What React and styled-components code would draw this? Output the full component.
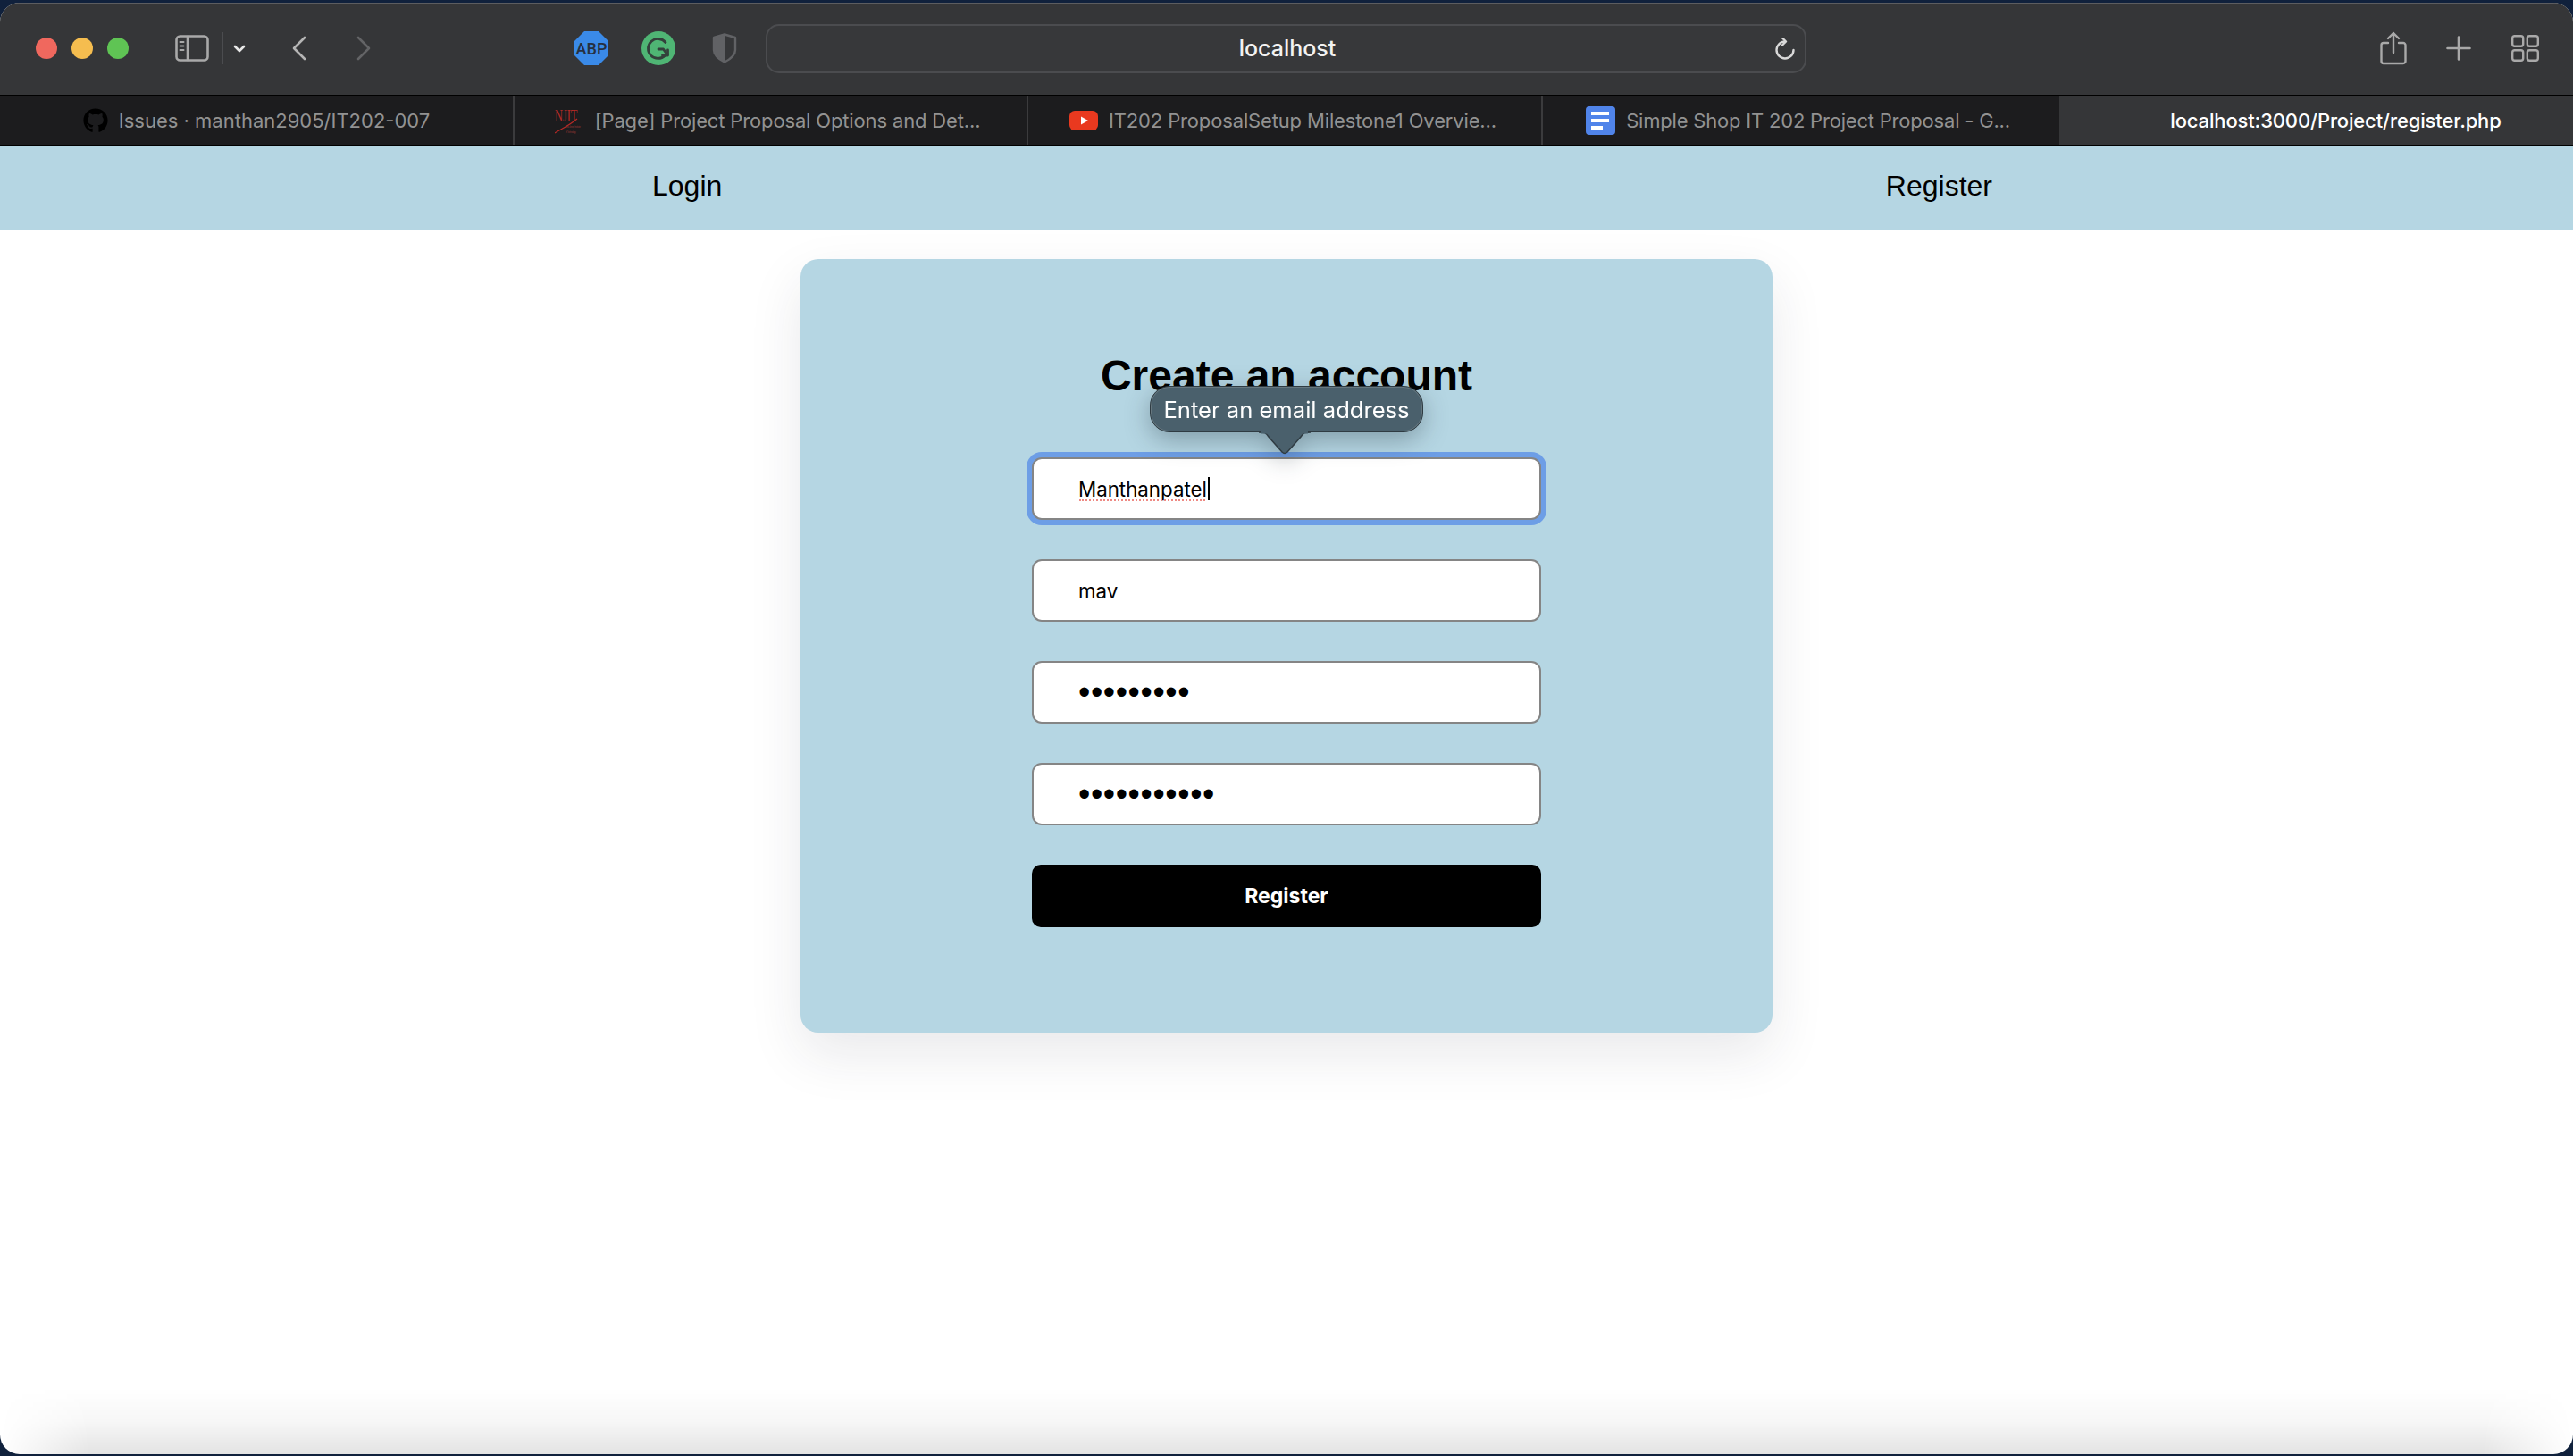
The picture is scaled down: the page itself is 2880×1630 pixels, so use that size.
import React from "react";
import styled, { createGlobalStyle } from "styled-components";
import { FaGithub } from "react-icons/fa";

const Global = createGlobalStyle`
  html, body { margin: 0; padding: 0; background: #10213c; }
  * { box-sizing: border-box; }
`;

const UI_FONT = `Inter, "Noto Sans", sans-serif`;
const PAGE_FONT = `"Liberation Sans", Arial, sans-serif`;

const Screen = styled.div`
  width: 2880px;
  height: 1630px;
  padding-top: 3px;
  background: #10213c;
  overflow: hidden;
`;
const BrowserWindow = styled.div`
  position: relative;
  height: 1625px;
  border-radius: 22px;
  overflow: hidden;
  background: #fff;
  display: flex;
  flex-direction: column;
`;
const Toolbar = styled.div`
  height: 103px;
  flex: none;
  display: flex;
  align-items: center;
  padding: 0 38px 2px 40px;
  background: #353638;
  border-top: 1px solid #5c5d60;
  font-family: ${UI_FONT};
`;
const Lights = styled.div`
  display: flex;
  gap: 16px;
`;
const Light = styled.span`
  width: 24px;
  height: 24px;
  border-radius: 50%;
  background: ${(p) => p.$color};
`;
const ToolIcon = styled.svg`
  flex: none;
  display: block;
  margin-left: ${(p) => p.$left || 0}px;
`;
const Divider = styled.span`
  width: 2px;
  height: 36px;
  margin-left: 14px;
  background: #4b4c4f;
`;
const AddressBar = styled.div`
  width: 1165px;
  height: 55px;
  margin-left: 32px;
  padding-left: 3px;
  position: relative;
  display: flex;
  align-items: center;
  justify-content: center;
  border: 2px solid #4b4c4f;
  border-radius: 15px;
  background: #37383a;
  color: #f2f2f2;
  font-size: 25px;
  font-weight: 500;
`;
const ReloadIcon = styled.svg`
  position: absolute;
  right: 9px;
  top: 13px;
`;
const RightTools = styled.div`
  margin-left: auto;
  display: flex;
  align-items: center;
`;
const TabStrip = styled.div`
  height: 57px;
  flex: none;
  display: flex;
  background: #1c1c1e;
  border-top: 1px solid #000;
  border-bottom: 1px solid #000;
  font-family: ${UI_FONT};
`;
const Tab = styled.div`
  width: ${(p) => p.$width}px;
  flex: none;
  display: flex;
  align-items: center;
  justify-content: center;
  gap: 12px;
  padding-left: ${(p) => (p.$active ? 44 : 0)}px;
  padding-right: ${(p) => p.$nudge || 0}px;
  background: ${(p) => (p.$active ? "#353638" : "transparent")};
  color: ${(p) => (p.$active ? "#fff" : "#929292")};
  font-size: 22px;
  letter-spacing: ${(p) => p.$tracking || "-0.15px"};
  font-weight: ${(p) => (p.$active ? 500 : 400)};
  white-space: nowrap;
  border-right: ${(p) => (p.$last ? "none" : "2px solid #3b3b3d")};
`;
const Favicon = styled.svg`
  flex: none;
  display: block;
`;
const NavBar = styled.nav`
  height: 94px;
  flex: none;
  display: flex;
  align-items: center;
  justify-content: space-between;
  padding: 0 650px 4px 730px;
  background: #b5d6e3;
  color: #000;
  font-family: ${PAGE_FONT};
  font-size: 32px;
`;
const Content = styled.main`
  flex: 1;
  display: flex;
  flex-direction: column;
  align-items: center;
  padding-top: 33px;
`;
const Card = styled.section`
  width: 1088px;
  height: 866px;
  padding-top: 103px;
  display: flex;
  flex-direction: column;
  align-items: center;
  border-radius: 20px;
  background: #b5d6e3;
  box-shadow: 0 24px 60px rgba(40, 40, 60, 0.1);
`;
const Title = styled.h1`
  margin: 0 0 63px;
  font-family: ${PAGE_FONT};
  font-size: 48px;
  line-height: 56px;
  font-weight: 700;
  color: #000;
`;
const Form = styled.form`
  width: 570px;
  display: flex;
  flex-direction: column;
  gap: 44px;
`;
const Field = styled.div`
  position: relative;
  height: 70px;
`;
const Input = styled.input`
  width: 100%;
  height: 100%;
  padding: 0 0 0 50px;
  border: 2px solid #858585;
  border-radius: 11px;
  outline: none;
  background: #fff;
  color: #000;
  font-family: ${UI_FONT};
  font-size: 22.3px;
  box-shadow: ${(p) => (p.$focused ? "0 0 0 6px #6d9ee6" : "none")};
`;
const PasswordInput = styled(Input)`
  font-family: ${PAGE_FONT};
  font-size: 38px;
  letter-spacing: 0.6px;
`;
const Caret = styled.span`
  position: absolute;
  left: 197px;
  top: 22px;
  width: 2px;
  height: 26px;
  background: #000;
`;
const SpellMark = styled.span`
  position: absolute;
  left: 53px;
  top: 47px;
  width: 141px;
  border-top: 2px dotted #ee8a84;
`;
const SubmitButton = styled.button`
  height: 70px;
  border: none;
  border-radius: 10px;
  background: #000;
  color: #fff;
  font-family: ${UI_FONT};
  font-size: 23px;
  font-weight: 700;
`;
const Tooltip = styled.div`
  position: absolute;
  left: 132px;
  top: -80px;
  width: 306px;
  height: 52px;
  display: flex;
  align-items: center;
  justify-content: center;
  border: 1px solid #2f3b42;
  border-radius: 22px;
  background: #4a606c;
  box-shadow: inset 0 0 0 1px #66777f;
  color: #fff;
  font-family: ${UI_FONT};
  font-size: 25.6px;
  white-space: nowrap;
  filter: drop-shadow(0 8px 14px rgba(20, 30, 40, 0.32));
`;
const TooltipTail = styled.svg`
  position: absolute;
  left: 119px;
  top: 48px;
`;
const BottomFade = styled.div`
  position: absolute;
  left: 0;
  right: 0;
  bottom: 0;
  height: 74px;
  background: linear-gradient(to bottom, rgba(0, 0, 0, 0), rgba(0, 0, 0, 0.03) 50%, rgba(0, 0, 0, 0.11));
  mask-image: linear-gradient(to right, transparent, #000 100px, #000 calc(100% - 100px), transparent);
  pointer-events: none;
`;

const stroke = { fill: "none", strokeLinecap: "round", strokeLinejoin: "round" };

const SidebarIcon = () => (
  <ToolIcon $left={52} width="38" height="30" viewBox="0 0 38 30" {...stroke} stroke="#a9a9a9" strokeWidth="2.6">
    <rect x="1.5" y="1.5" width="35" height="27" rx="4" />
    <path d="M14 2v26" />
    <path d="M5.5 8h4M5.5 12.5h4M5.5 17h4" strokeWidth="2" />
  </ToolIcon>
);

const ChevronDown = () => (
  <ToolIcon $left={11} width="14" height="9" viewBox="0 0 14 9" {...stroke} stroke="#e8e8e8" strokeWidth="2.6">
    <path d="M2 2l5 5 5-5" />
  </ToolIcon>
);

const Chevron = ({ left, color, flip }) => (
  <ToolIcon $left={left} width="16" height="28" viewBox="0 0 16 28" {...stroke} stroke={color} strokeWidth="2.6">
    <path d={flip ? "M2 2l12 12L2 26" : "M14 2L2 14l12 12"} />
  </ToolIcon>
);

const AbpIcon = () => (
  <ToolIcon $left={228} width="38" height="38" viewBox="0 0 38 38">
    <path d="M11 0h16l11 11v16L27 38H11L0 27V11z" fill="#3a8ae8" />
    <text x="19" y="25.5" textAnchor="middle" fontFamily="Roboto, sans-serif" fontWeight="500" fontSize="18" fill="#263040">ABP</text>
  </ToolIcon>
);

const GrammarlyIcon = () => (
  <ToolIcon $left={37} width="38" height="38" viewBox="0 0 38 38">
    <circle cx="19" cy="19" r="19" fill="#4fb574" />
    <g {...stroke} stroke="#33403b" strokeWidth="2.8">
      <path d="M27 12.5A11 11 0 1 0 26.5 27" />
      <path d="M19 20h5.5l4.5 6.5" />
      <path d="M29.5 21v6h-6" />
    </g>
  </ToolIcon>
);

const ShieldIcon = () => (
  <ToolIcon $left={41} width="28" height="34" viewBox="0 0 28 34">
    <path d="M14 1.5L2 5v14c0 6 5 10 12 13.5z" fill="#616265" />
    <path d="M14 1.5L26 5v14c0 6-5 10-12 13.5C7 29 2 25 2 19V5z" fill="none" stroke="#616265" strokeWidth="2.4" strokeLinejoin="round" />
  </ToolIcon>
);

const ShareIcon = () => (
  <ToolIcon width="30" height="38" viewBox="0 0 30 38" {...stroke} stroke="#a9a9a9" strokeWidth="2.4">
    <path d="M9 13H4a2.5 2.5 0 0 0-2.5 2.5v18A2.5 2.5 0 0 0 4 36h22a2.5 2.5 0 0 0 2.5-2.5v-18A2.5 2.5 0 0 0 26 13h-5" />
    <path d="M15 24V2M9 8l6-6 6 6" />
  </ToolIcon>
);

const PlusIcon = () => (
  <ToolIcon $left={44} width="28" height="28" viewBox="0 0 28 28" {...stroke} stroke="#a9a9a9" strokeWidth="2.6">
    <path d="M14 1.5v25M1.5 14h25" />
  </ToolIcon>
);

const TabsIcon = () => (
  <ToolIcon $left={45} width="31" height="30" viewBox="0 0 31 30" fill="none" stroke="#a9a9a9" strokeWidth="2.4">
    <rect x="1.2" y="1.2" width="12" height="11.5" rx="2.5" />
    <rect x="17.8" y="1.2" width="12" height="11.5" rx="2.5" />
    <rect x="1.2" y="17.3" width="12" height="11.5" rx="2.5" />
    <rect x="17.8" y="17.3" width="12" height="11.5" rx="2.5" />
  </ToolIcon>
);

const NjitIcon = () => (
  <Favicon width="33" height="32" viewBox="0 0 33 32">
    <text transform="translate(0 17) scale(0.7 1)" fontFamily="Liberation Serif, serif" fontSize="18" fill="#b52a26">NJIT</text>
    <path d="M0 30C8 25 17 21 25 14" fill="none" stroke="#b52a26" strokeWidth="1.2" />
    <text transform="translate(12 24) scale(0.6 1)" fontFamily="Liberation Sans, sans-serif" fontSize="3.4" fill="#9c3a36">New Jersey Institute</text>
    <text transform="translate(12 30) scale(0.6 1)" fontFamily="Liberation Sans, sans-serif" fontSize="3.4" fill="#9c3a36">of Technology</text>
  </Favicon>
);

const YoutubeIcon = () => (
  <Favicon width="32" height="22" viewBox="0 0 32 22">
    <rect width="32" height="22" rx="6" fill="#e9391f" />
    <path d="M13 6.5l8 4.5-8 4.5z" fill="#fff" />
  </Favicon>
);

const DocsIcon = () => (
  <Favicon width="33" height="32" viewBox="0 0 33 32">
    <rect width="33" height="32" rx="4" fill="#5084ea" />
    <path d="M6 6h20v4H6zM6 14h20v4H6zM6 22h13v4H6z" fill="#fff" />
  </Favicon>
);

const tabs = [
  { width: 576, icon: <FaGithub size={28} color="#000" />, title: "Issues · manthan2905/IT202-007", tracking: "0px" },
  { width: 575, icon: <NjitIcon />, title: "[Page] Project Proposal Options and Det...", nudge: 7 },
  { width: 576, icon: <YoutubeIcon />, title: "IT202 ProposalSetup Milestone1 Overvie...", nudge: 4 },
  { width: 578, icon: <DocsIcon />, title: "Simple Shop IT 202 Project Proposal - G...", nudge: 7, tracking: "-0.2px" },
  { width: 575, title: "localhost:3000/Project/register.php", active: true },
];

export default function App() {
  return (
    <Screen>
      <Global />
      <BrowserWindow>
        <Toolbar>
          <Lights>
            <Light $color="#f0685e" />
            <Light $color="#f5bd4f" />
            <Light $color="#5fc454" />
          </Lights>
          <SidebarIcon />
          <Divider />
          <ChevronDown />
          <Chevron left={52} color="#b5b5b5" />
          <Chevron left={56} color="#636466" flip />
          <AbpIcon />
          <GrammarlyIcon />
          <ShieldIcon />
          <AddressBar>
            localhost
            <ReloadIcon width="26" height="26" viewBox="0 0 26 26" {...stroke} stroke="#d8d8d8" strokeWidth="2.4">
              <path d="M13 4.5a9.5 9.5 0 1 0 9.5 9.5" />
              <path d="M10 0.5l4 4-4 4" />
            </ReloadIcon>
          </AddressBar>
          <RightTools>
            <ShareIcon />
            <PlusIcon />
            <TabsIcon />
          </RightTools>
        </Toolbar>
        <TabStrip>
          {tabs.map((tab, i) => (
            <Tab
              key={tab.title}
              $width={tab.width}
              $active={tab.active}
              $nudge={tab.nudge}
              $tracking={tab.tracking}
              $last={i >= tabs.length - 2}
            >
              {tab.icon}
              {tab.title}
            </Tab>
          ))}
        </TabStrip>
        <NavBar>
          <span>Login</span>
          <span>Register</span>
        </NavBar>
        <Content>
          <Card>
            <Title>Create an account</Title>
            <Form onSubmit={(e) => e.preventDefault()}>
              <Field>
                <Input $focused type="text" defaultValue="Manthanpatel" readOnly spellCheck="false" />
                <SpellMark />
                <Caret />
                <Tooltip>
                  Enter an email address
                  <TooltipTail width="62" height="28" viewBox="0 0 62 28">
                    <path d="M2 3C8 3 10 3 13 8L28 25Q31 28 34 25L49 8C52 3 54 3 60 3" fill="#4a606c" stroke="#2f3b42" strokeWidth="1.5" />
                    <path d="M5 0h52v4.5H5z" fill="#4a606c" />
                  </TooltipTail>
                </Tooltip>
              </Field>
              <Field>
                <Input type="text" defaultValue="mav" readOnly />
              </Field>
              <Field>
                <PasswordInput type="password" defaultValue="password1" readOnly />
              </Field>
              <Field>
                <PasswordInput type="password" defaultValue="password123" readOnly />
              </Field>
              <SubmitButton type="submit">Register</SubmitButton>
            </Form>
          </Card>
        </Content>
        <BottomFade />
      </BrowserWindow>
    </Screen>
  );
}
